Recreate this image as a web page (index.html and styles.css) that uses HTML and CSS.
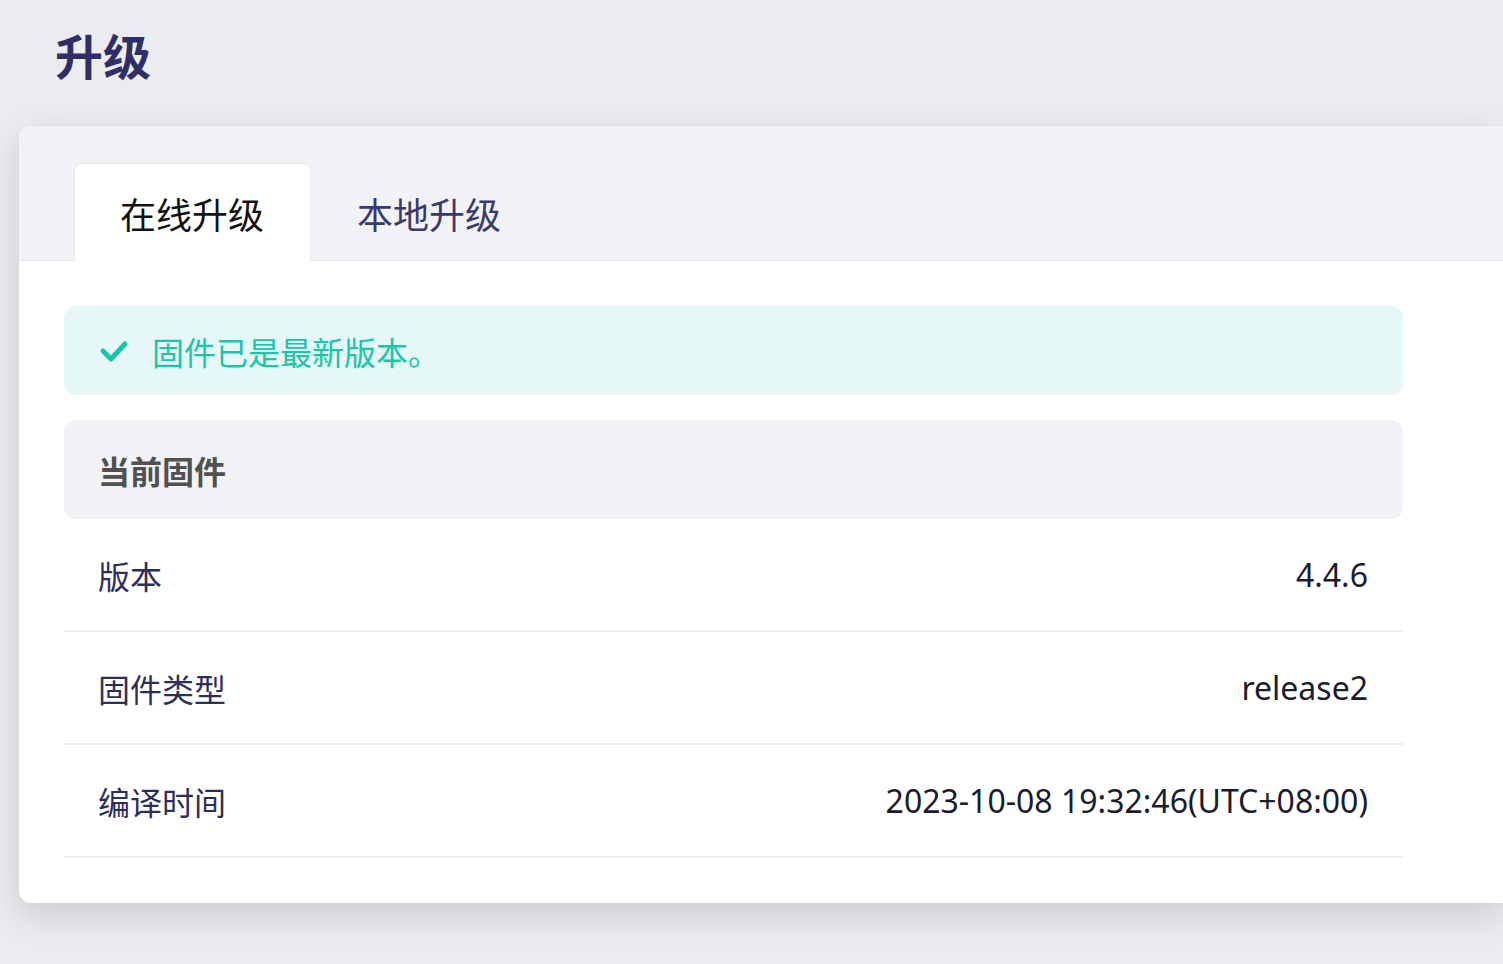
FILE: index.html
```html
<!DOCTYPE html>
<html lang="zh-CN">
<head>
    <meta charset="UTF-8">
    <meta name="viewport" content="width=device-width, initial-scale=1.0">
    <title>升级</title>
    <link rel="stylesheet" href="styles.css">
</head>
<body>
    <h1 class="page-title">升级</h1>
    <div class="card">
        <div class="tabs">
            <div class="tab active">在线升级</div>
            <div class="tab">本地升级</div>
        </div>
        <div class="card-body">
            <div class="alert">
                <svg class="alert-icon" width="30" height="24" viewBox="0 0 30 24">
                    <path d="M4 12 L12 20 L26 5" fill="none" stroke="#1cc4aa" stroke-width="5" stroke-linecap="round" stroke-linejoin="round"/>
                </svg>
                <span>固件已是最新版本。</span>
            </div>
            <div class="section-head">当前固件</div>
            <div class="row">
                <span class="label">版本</span>
                <span class="value">4.4.6</span>
            </div>
            <div class="row">
                <span class="label">固件类型</span>
                <span class="value">release2</span>
            </div>
            <div class="row">
                <span class="label">编译时间</span>
                <span class="value">2023-10-08 19:32:46(UTC+08:00)</span>
            </div>
        </div>
    </div>
</body>
</html>
```

FILE: styles.css
```css
body {
    font-family: "Noto Sans", "Noto Sans CJK SC", sans-serif;
    background-color: #ebebf0;
    margin: 0;
    padding: 0;
    min-height: 100vh;
}
.page-title {
    margin: 0;
    padding: 24px 0 0 55px;
    height: 126px;
    box-sizing: border-box;
    font-size: 48px;
    line-height: 66px;
    font-weight: 700;
    color: #2f2f66;
}
/* Карточка уходит за правый край окна */
.card {
    margin-left: 19px;
    background-color: #fff;
    border-radius: 12px 0 0 12px;
    box-shadow: 0 12px 36px rgba(0, 0, 0, 0.14);
}
.tabs {
    display: flex;
    padding: 37px 0 0 55px;
    background-color: #f2f2f6;
    border-bottom: 1px solid #e8e8ee;
    border-radius: 12px 0 0 0;
}
.tab {
    height: 97px;
    padding: 0 46px 0 45px;
    font-size: 36px;
    line-height: 104px;
    color: #3a3a6a;
    box-sizing: border-box;
    border: 1px solid transparent;
    border-bottom: none;
}
.tab.active {
    background-color: #fff;
    color: #111;
    border-color: #e8e8ee;
    border-radius: 8px 8px 0 0;
    margin-bottom: -1px;
    height: 98px;
}
.card-body {
    width: 1339px;
    padding: 45px;
}
.alert {
    display: flex;
    align-items: center;
    gap: 23px;
    height: 89px;
    padding-left: 35px;
    background-color: #e5f8f7;
    border-radius: 12px;
    color: #1cc4aa;
    font-size: 32px;
}
.alert-icon {
    flex: none;
}
.section-head {
    margin-top: 25px;
    height: 99px;
    padding-left: 34px;
    display: flex;
    align-items: center;
    background-color: #f2f2f6;
    border-radius: 12px;
    font-size: 32px;
    font-weight: 700;
    color: #505050;
}
.row {
    display: flex;
    justify-content: space-between;
    align-items: center;
    height: 113px;
    padding: 0 35px 0 34px;
    box-sizing: border-box;
    border-bottom: 2px solid #ebebf1;
    font-size: 32px;
}
.label {
    color: #2e2e5c;
}
.value {
    color: #1b1b2f;
}
```
